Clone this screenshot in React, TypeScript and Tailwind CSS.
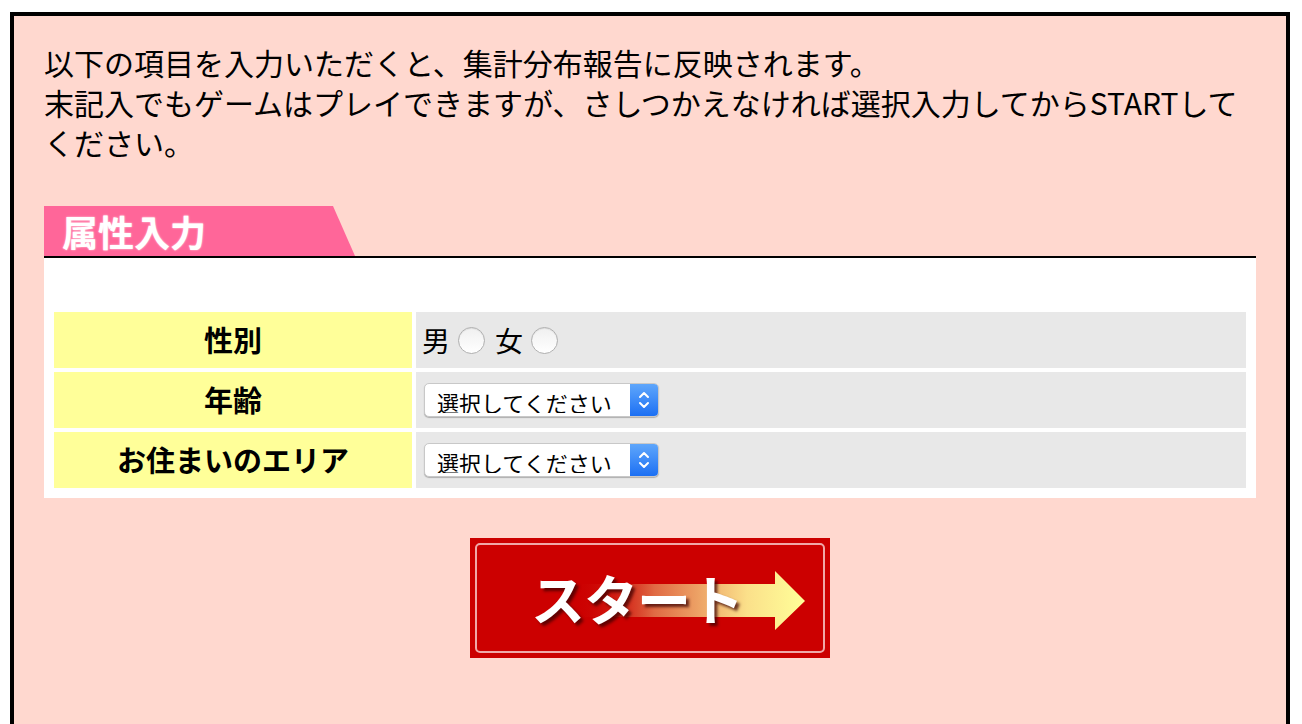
import React, { useState } from 'react'

const jp = "font-['Noto_Sans_CJK_JP','Noto_Sans',sans-serif]"

const Radio = ({ name, value, checked, onChange }: { name: string; value: string; checked: boolean; onChange: (v: string) => void }) => (
  <input
    type="radio"
    name={name}
    value={value}
    checked={checked}
    onChange={() => onChange(value)}
    className="appearance-none w-[27px] h-[27px] rounded-full border border-[#b0b0b0] bg-gradient-to-b from-[#f0f0f0] to-white checked:bg-[#3b8af5] checked:border-[#2a6fd6] shadow-[inset_0_1px_1px_rgba(0,0,0,0.08)] cursor-pointer"
  />
)

const SelectBox = ({ options }: { options: string[] }) => (
  <div className="flex w-[235px] h-[34px] rounded-[5px] bg-white border border-[#c8c8c8] shadow-[0_1px_1px_rgba(0,0,0,0.25)] overflow-hidden">
    <select className="flex-1 appearance-none bg-transparent pl-[12px] pt-[3px] text-[22px] leading-none text-black outline-none">
      <option>選択してください</option>
      {options.map((o) => (
        <option key={o}>{o}</option>
      ))}
    </select>
    <div className="w-[28px] flex items-center justify-center bg-gradient-to-b from-[#5ea6fb] to-[#1b6ff3]">
      <svg width="12" height="20" viewBox="0 0 12 20" fill="none" stroke="white" strokeWidth="2" strokeLinecap="round" strokeLinejoin="round">
        <path d="M2 7 L6 3 L10 7" />
        <path d="M2 13 L6 17 L10 13" />
      </svg>
    </div>
  </div>
)

export default function App() {
  const [sex, setSex] = useState('')

  return (
    <div className={`${jp} bg-white min-h-[724px]`}>
      <div className="ml-[10px] mt-[12px] w-[1280px] border-x-4 border-t-4 border-black bg-[#ffd8cf] px-[30px] pt-[26px] pb-[100px]">
        <p className="text-[30px] leading-[40px] text-black">
          以下の項目を入力いただくと、集計分布報告に反映されます。
          <br />
          末記入でもゲームはプレイできますが、さしつかえなければ選択入力してからSTARTしてください。
        </p>

        <div className="mt-[44px] border-b-2 border-black">
          <div className="w-[311px] h-[50px] bg-[#ff6699] pl-[18px] flex items-center [clip-path:polygon(0_0,289px_0,311px_100%,0_100%)]">
            <span className="text-[36px] font-bold text-white leading-none [text-shadow:0_0_2px_rgba(255,255,255,0.8)]">属性入力</span>
          </div>
        </div>

        <div className="bg-white pt-[54px] pb-[10px] px-[10px]">
          <div className="grid grid-cols-[358px_1fr] gap-[4px]">
            <div className="bg-[#ffff99] h-[56px] flex items-center justify-center text-[29px] font-bold">性別</div>
            <div className="bg-[#e8e8e8] h-[56px] flex items-center pl-[6px] text-[28px] gap-[8px]">
              <span>男</span>
              <Radio name="sex" value="m" checked={sex === 'm'} onChange={setSex} />
              <span className="ml-[2px]">女</span>
              <Radio name="sex" value="f" checked={sex === 'f'} onChange={setSex} />
            </div>

            <div className="bg-[#ffff99] h-[56px] flex items-center justify-center text-[29px] font-bold">年齢</div>
            <div className="bg-[#e8e8e8] h-[56px] flex items-center pl-[8px]">
              <SelectBox options={['10代', '20代', '30代', '40代', '50代', '60代以上']} />
            </div>

            <div className="bg-[#ffff99] h-[56px] flex items-center justify-center text-[29px] font-bold">お住まいのエリア</div>
            <div className="bg-[#e8e8e8] h-[56px] flex items-center pl-[8px]">
              <SelectBox options={['北海道', '東北', '関東', '中部', '近畿', '中国', '四国', '九州・沖縄']} />
            </div>
          </div>
        </div>

        <div className="mt-[40px] flex justify-center">
          <button className="relative w-[360px] h-[120px] bg-[#cc0000] p-[5px] cursor-pointer">
            <div className="relative h-full w-full rounded-[5px] border-2 border-[#f0a8a8] flex items-center pl-[54px]">
              <svg className="absolute left-[96px] top-[26px]" width="234" height="60" viewBox="0 0 234 60">
                <defs>
                  <linearGradient id="arr" x1="0" y1="0" x2="1" y2="0">
                    <stop offset="0" stopColor="#cc0000" stopOpacity="0" />
                    <stop offset="0.35" stopColor="#e06a44" />
                    <stop offset="0.75" stopColor="#fbe08a" />
                    <stop offset="1" stopColor="#ffff99" />
                  </linearGradient>
                </defs>
                <path d="M0 13 H202 V0 L232 30 L202 59 V46 H0 Z" fill="url(#arr)" />
              </svg>
              <span className="relative text-[54px] font-bold text-white tracking-[-1px] leading-none [text-shadow:3px_3px_3px_rgba(60,0,0,0.75)]">
                スタート
              </span>
            </div>
          </button>
        </div>
      </div>
    </div>
  )
}
